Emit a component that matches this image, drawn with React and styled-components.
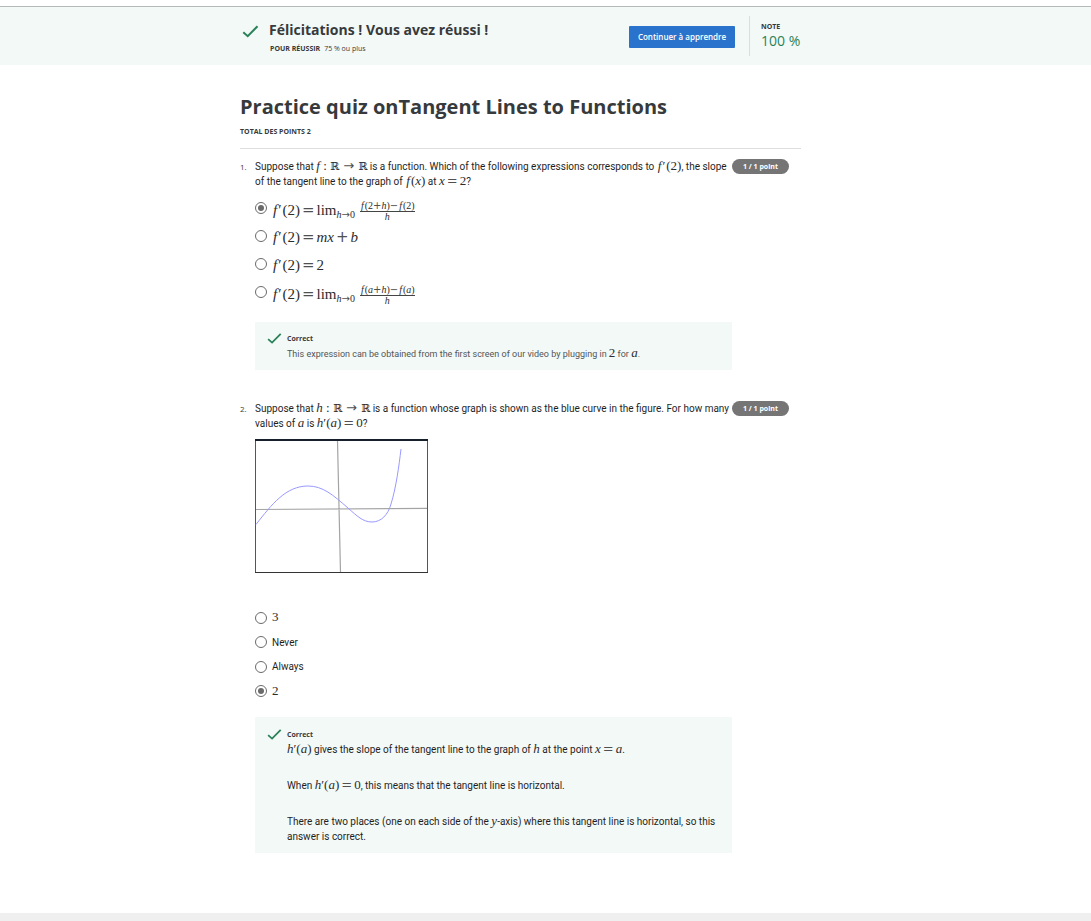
import React from "react";
import styled, { createGlobalStyle, css } from "styled-components";

const GlobalStyle = createGlobalStyle`
  *, *::before, *::after { box-sizing: border-box; }
  body {
    margin: 0;
    background: #fff;
    color: #373a3c;
    font-family: "Open Sans", "Noto Sans", sans-serif;
    font-size: 10px;
    line-height: 15px;
  }
  h1, h2, h3, p, ol, dl, dd, fieldset { margin: 0; padding: 0; border: 0; }
`;

const Page = styled.div`
  display: flex;
  flex-direction: column;
  min-height: 100vh;
  padding-top: 6px;
`;

const Banner = styled.header`
  display: flex;
  align-items: flex-start;
  height: 59px;
  padding: 9px 290px 0 242px;
  border-top: 1px solid #b4bab7;
  background: #f3f9f7;
`;

const BannerText = styled.div`
  flex: 1;
  padding-left: 10px;
`;

const BannerTitle = styled.h2`
  font-size: 14px;
  line-height: 28px;
  white-space: nowrap;
`;

const PassLine = styled.p`
  padding-left: 1px;
  font-size: 7px;
  line-height: 10px;
  white-space: nowrap;
  b { margin-right: 4px; }
`;

const ContinueButton = styled.button`
  width: 106px;
  height: 22px;
  margin: 10px 14px 0 0;
  padding: 0;
  border: 0;
  border-radius: 1px;
  background: #2a73cc;
  color: #fff;
  font: 600 8px/22px "Open Sans", sans-serif;
  white-space: nowrap;
`;

const Grade = styled.dl`
  width: 52px;
  height: 40px;
  padding: 6px 0 0 11px;
  border-left: 1px solid #dadfdd;
  white-space: nowrap;
  dt { font-size: 7px; font-weight: 700; line-height: 10px; }
  dd { color: #2a8259; font-size: 14px; line-height: 17px; }
`;

const Main = styled.main`
  flex: 1;
  padding: 28px 290px 60px 240px;
`;

const QuizHeader = styled.div`
  padding-bottom: 11px;
  border-bottom: 1px solid #ddd;
`;

const QuizTitle = styled.h1`
  font-size: 20px;
  line-height: 28px;
  white-space: nowrap;
`;

const Total = styled.p`
  padding-top: 6px;
  font-size: 7px;
  font-weight: 700;
  line-height: 10px;
`;

const QuestionItem = styled.section`
  display: grid;
  grid-template-columns: 15px 1fr 69px;
  align-items: start;
  padding-top: ${(p) => p.$top}px;
`;

const Number = styled.span`
  font-size: 8px;
`;

const readingFont = css`
  font-family: Roboto, "Open Sans", sans-serif;
`;

const Prompt = styled.p`
  ${readingFont}
  color: #1f1f1f;
  white-space: nowrap;
`;

const Pill = styled.span`
  width: 57px;
  height: 15px;
  border-radius: 8px;
  background: #757575;
  color: #fff;
  font-size: 7px;
  font-weight: 700;
  line-height: 16px;
  text-align: center;
`;

const Body = styled.div`
  min-width: 0;
`;

const Options = styled.fieldset`
  display: flex;
  flex-direction: column;
  padding: ${(p) => p.$top}px 0 ${(p) => p.$bottom}px;
  min-width: 0;
`;

const OptionLabel = styled.label`
  ${readingFont}
  display: flex;
  align-items: center;
  height: ${(p) => p.$height}px;
  color: #1f1f1f;
  white-space: nowrap;
`;

const OptionText = styled.span`
  padding-top: ${(p) => p.$drop || 0}px;
`;

const Radio = styled.input`
  flex: none;
  appearance: none;
  display: grid;
  place-items: center;
  width: 12px;
  height: 12px;
  margin: 0 5px 0 0;
  border: 1px solid #6a6a6a;
  border-radius: 50%;
  background: #fff;
  &:checked::before {
    content: "";
    width: 6px;
    height: 6px;
    border-radius: 50%;
    background: #6a6a6a;
  }
`;

const FeedbackBox = styled.div`
  display: flex;
  padding: ${(p) => (p.$roomy ? "10px 12px 9px" : "9px 12px 8px")};
  background: #f3f9f7;
`;

const FeedbackText = styled.div`
  flex: 1;
  min-width: 0;
  padding-left: 5px;
`;

const FeedbackTitle = styled.h3`
  font-size: 7px;
  line-height: 15px;
`;

const FeedbackLine = styled.p`
  ${readingFont}
  color: #1f1f1f;
  & + & { padding-top: 21px; }
  ${(p) => p.$small && css`
    color: #525557;
    font-size: 9px;
    line-height: 16px;
  `}
`;

const Figure = styled.svg`
  display: block;
  margin-top: 8px;
`;

const CheckSvg = styled.svg`
  flex: none;
  margin-top: ${(p) => p.$top}px;
`;

const Footer = styled.footer`
  height: 8px;
  background: #efefef;
`;

const Math = styled.span`
  color: #2c2c2c;
  font-family: "Liberation Serif", "DejaVu Serif", serif;
  font-size: ${(p) => (p.$large ? 15 : 13)}px;
  line-height: 0;
  white-space: nowrap;
`;

const Sign = styled.span`
  margin: 0 ${(p) => p.$gap || 0}px;
  color: #505050;
  font-family: "DejaVu Sans", sans-serif;
`;

const Func = styled.i`
  margin: 0 1px;
`;

const Prime = styled.span`
  margin-right: 1px;
`;

const Reals = styled.span`
  font-family: "DejaVu Serif", serif;
  font-size: 11px;
`;

const Sub = styled.sub`
  font-size: 10px;
  line-height: 0;
  vertical-align: -3px;
`;

const Fraction = styled.span`
  display: inline-flex;
  flex-direction: column;
  align-items: center;
  margin-left: 5px;
  font-size: 10px;
  line-height: 9px;
  vertical-align: 6px;
`;

const Numerator = styled.span`
  padding-bottom: 1px;
  border-bottom: 1px solid #444;
`;

function Check({ size, top }) {
  return (
    <CheckSvg $top={top} width={size} height={size} viewBox="0 0 16 16" aria-hidden="true">
      <path d="M1.2 8.6 5.4 12.4 14.6 3" fill="none" stroke="#2a8259" strokeWidth="1.9" />
    </CheckSvg>
  );
}

function Option({ name, checked, drop, height, children }) {
  return (
    <OptionLabel $height={height}>
      <Radio type="radio" name={name} defaultChecked={checked} />
      <OptionText $drop={drop}>{children}</OptionText>
    </OptionLabel>
  );
}

const Equals = () => <Sign $gap={2}>=</Sign>;

const FPrime = () => <><Func>f</Func><Prime>′</Prime>(2)</>;

const HPrime = () => <><i>h</i>′(<i>a</i>)</>;

function Mapping({ name }) {
  return (
    <Math>{name} : <Reals>ℝ</Reals><Sign $gap={4}>→</Sign><Reals>ℝ</Reals></Math>
  );
}

function LimitFormula({ point }) {
  return (
    <Math $large>
      <FPrime /><Equals />lim<Sub><i>h</i><Sign>→</Sign>0</Sub>
      <Fraction>
        <Numerator>
          <Func>f</Func>({point}<Sign>+</Sign><i>h</i>)<Sign>−</Sign><Func>f</Func>({point})
        </Numerator>
        <i>h</i>
      </Fraction>
    </Math>
  );
}

function Feedback({ roomy, children }) {
  return (
    <FeedbackBox $roomy={roomy}>
      <Check size={15} top={0} />
      <FeedbackText>
        <FeedbackTitle>Correct</FeedbackTitle>
        {children}
      </FeedbackText>
    </FeedbackBox>
  );
}

function CurveFigure() {
  return (
    <Figure width="173" height="134" viewBox="0 0 173 134" role="img" aria-label="Graph of the function h">
      <rect x="0.5" y="0.5" width="172" height="133" fill="#fff" stroke="#54575a" />
      <path d="M0 1H173" stroke="#17202b" strokeWidth="2" />
      <path d="M0 133.5H173" stroke="#333" strokeWidth="1" />
      <path d="M1 70.5 172 69.3M82.5 2 85.5 133" fill="none" stroke="#a4a4a4" strokeWidth="1.2" />
      <path d="M1 85.5 C17 65 31 47 53 47 C68 47 78 56 93 69 C102 77 108 83 117 83 C126 83 133 76 136 65 C141 49 144 27 146 10" fill="none" stroke="#9999ff" />
    </Figure>
  );
}

export default function App() {
  return (
    <>
      <GlobalStyle />
      <Page>
        <Banner>
          <Check size={17} top={7} />
          <BannerText>
            <BannerTitle>Félicitations ! Vous avez réussi !</BannerTitle>
            <PassLine><b>POUR RÉUSSIR</b>75 % ou plus</PassLine>
          </BannerText>
          <ContinueButton type="button">Continuer à apprendre</ContinueButton>
          <Grade>
            <dt>NOTE</dt>
            <dd>100 %</dd>
          </Grade>
        </Banner>
        <Main>
          <QuizHeader>
            <QuizTitle>Practice quiz onTangent Lines to Functions</QuizTitle>
            <Total>TOTAL DES POINTS 2</Total>
          </QuizHeader>

          <QuestionItem $top={10}>
            <Number>1.</Number>
            <Body>
              <Prompt>
                Suppose that <Mapping name={<i>f</i>} /> is a function. Which of the following expressions corresponds to <Math><FPrime /></Math>, the slope<br />
                of the tangent line to the graph of <Math><Func>f</Func>(<i>x</i>)</Math> at <Math><i>x</i><Equals />2</Math>?
              </Prompt>
              <Options $top={5} $bottom={16} aria-label="Question 1">
                <Option name="q1" height={28} drop={6} checked><LimitFormula point="2" /></Option>
                <Option name="q1" height={28} drop={4}>
                  <Math $large><FPrime /><Equals /><i>mx</i><Sign $gap={2}>+</Sign><i>b</i></Math>
                </Option>
                <Option name="q1" height={28} drop={4}>
                  <Math $large><FPrime /><Equals />2</Math>
                </Option>
                <Option name="q1" height={28} drop={6}><LimitFormula point={<i>a</i>} /></Option>
              </Options>
              <Feedback>
                <FeedbackLine $small>
                  This expression can be obtained from the first screen of our video by plugging in <Math>2</Math> for <Math><i>a</i></Math>.
                </FeedbackLine>
              </Feedback>
            </Body>
            <Pill>1 / 1 point</Pill>
          </QuestionItem>

          <QuestionItem $top={31}>
            <Number>2.</Number>
            <Body>
              <Prompt>
                Suppose that <Mapping name={<i>h</i>} /> is a function whose graph is shown as the blue curve in the figure. For how many<br />
                values of <Math><i>a</i></Math> is <Math><HPrime /><Equals />0</Math>?
              </Prompt>
              <CurveFigure />
              <Options $top={32} $bottom={14} aria-label="Question 2">
                <Option name="q2" height={25}><Math>3</Math></Option>
                <Option name="q2" height={24}>Never</Option>
                <Option name="q2" height={25}>Always</Option>
                <Option name="q2" height={24} checked><Math>2</Math></Option>
              </Options>
              <Feedback roomy>
                <FeedbackLine>
                  <Math><HPrime /></Math> gives the slope of the tangent line to the graph of <Math><i>h</i></Math> at the point <Math><i>x</i><Equals /><i>a</i></Math>.
                </FeedbackLine>
                <FeedbackLine>
                  When <Math><HPrime /><Equals />0</Math>, this means that the tangent line is horizontal.
                </FeedbackLine>
                <FeedbackLine>
                  There are two places (one on each side of the <Math><i>y</i></Math>-axis) where this tangent line is horizontal, so this answer is correct.
                </FeedbackLine>
              </Feedback>
            </Body>
            <Pill>1 / 1 point</Pill>
          </QuestionItem>
        </Main>
        <Footer />
      </Page>
    </>
  );
}
